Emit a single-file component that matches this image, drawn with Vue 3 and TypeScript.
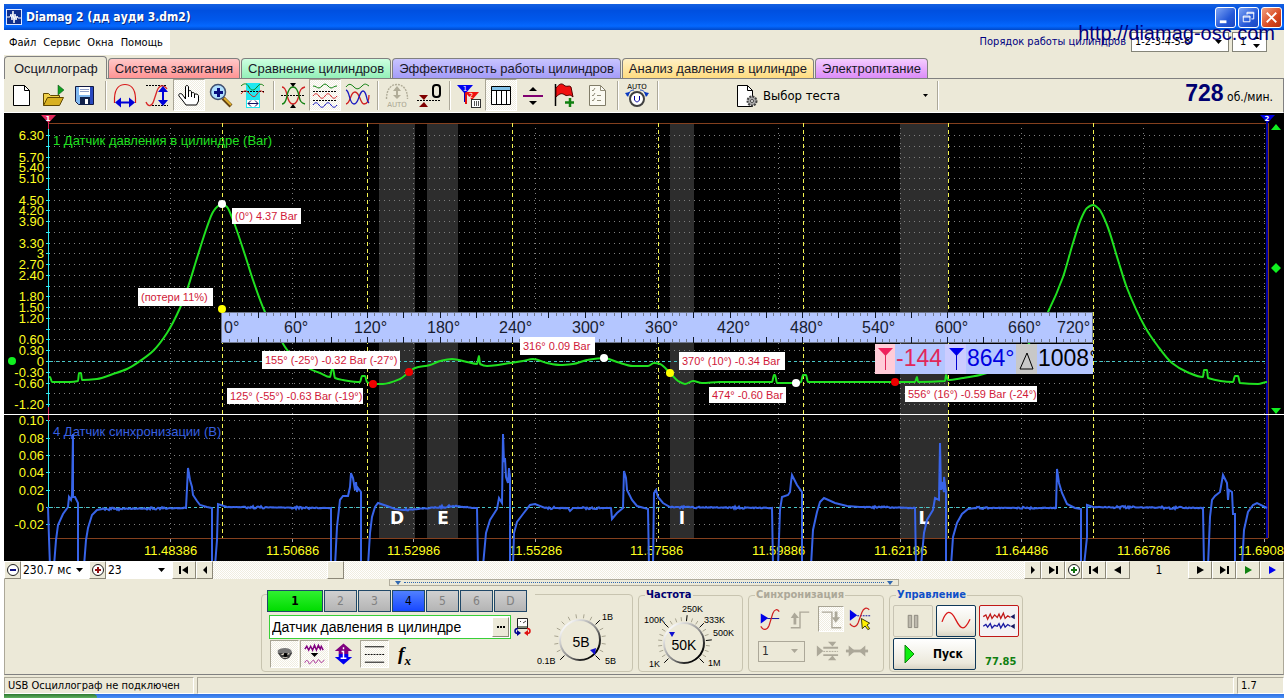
<script setup lang="ts">
import { ref } from 'vue'

type Point = [number, number]

interface Reading {
  x: number
  y: number
  w: number
  h: number
  text: string
}

const tabs = [
  { label: 'Осциллограф', tone: 'plain' },
  { label: 'Система зажигания', tone: 'red' },
  { label: 'Сравнение цилиндров', tone: 'green' },
  { label: 'Эффективность работы цилиндров', tone: 'violet' },
  { label: 'Анализ давления в цилиндре', tone: 'yellow' },
  { label: 'Электропитание', tone: 'magenta' },
]
const activeTab = ref('Осциллограф')

const channels = ['1', '2', '3', '4', '5', '6', 'D']
const channelName = ref('Датчик давления в цилиндре')

// Pressure channel scale: zero at y = 361, 10.76 px for each 0.3 bar.
const pressureY = (value: number): number => Math.round(361 - value * 35.87)
const pressureSteps: number[] = Array.from({ length: 26 }, (_, i) => (21 - i) * 0.3).map((v) => Math.round(v * 10) / 10)
const hiddenSteps = [6, 4.8, 3.6, 2.1, 0.9, -0.9]
const pressureLabels = pressureSteps
  .filter((v) => !hiddenSteps.includes(v))
  .map((v) => ({ y: pressureY(v), text: v === 0 || v === 3 ? String(v) : v.toFixed(2) }))

const syncSteps = [0.1, 0.08, 0.06, 0.04, 0.02, 0, -0.02]
const syncY = (value: number): number => Math.round(507 - value * 868)
const syncLabels = syncSteps.map((v) => ({ y: syncY(v), text: v === 0 ? '0' : v.toFixed(2) }))

const timeLabels = ['11.48386', '11.50686', '11.52986', '11.55286', '11.57586', '11.59886', '11.62186', '11.64486', '11.66786', '11.6908']
const timeX = (i: number): number => Math.round(170 + i * 121.6)

const strokeX = [222, 367, 512, 658, 803, 948, 1093]
const bands = [
  { x: 379, w: 36, letter: 'D' },
  { x: 427, w: 31, letter: 'E' },
  { x: 670, w: 24, letter: 'I' },
  { x: 900, w: 48, letter: 'L' },
]

// Crank angle ruler: 720 degrees over 870 px, a tick for each 6 degrees.
const rulerTicks = Array.from({ length: 119 }, (_, i) => i + 1).map((i) => ({
  x: Math.round(222 + i * 7.25),
  major: i % 5 === 0,
}))
const rulerLabels = Array.from({ length: 13 }, (_, i) => {
  const x = 222 + i * 72.6
  const shift = i === 0 ? -2 : i === 1 ? 11 : i === 12 ? 36 : 13
  return { x: Math.round(x - shift), text: `${i * 60}°` }
})

const readings: Reading[] = [
  { x: 232, y: 208, w: 69, h: 16, text: '(0°) 4.37 Bar' },
  { x: 138, y: 288, w: 75, h: 18, text: '(потери 11%)' },
  { x: 262, y: 351, w: 138, h: 18, text: '155° (-25°) -0.32 Bar (-27°)' },
  { x: 227, y: 388, w: 136, h: 16, text: '125° (-55°) -0.63 Bar (-19°)' },
  { x: 520, y: 337, w: 75, h: 18, text: '316° 0.09 Bar' },
  { x: 679, y: 352, w: 106, h: 18, text: '370° (10°) -0.34 Bar' },
  { x: 709, y: 387, w: 77, h: 16, text: '474° -0.60 Bar' },
  { x: 905, y: 386, w: 132, h: 16, text: '556° (16°) -0.59 Bar (-24°)' },
]

const dots = [
  { x: 222, y: 204, tone: 'white' },
  { x: 222, y: 309, tone: 'yellow' },
  { x: 373, y: 384, tone: 'red' },
  { x: 409, y: 372, tone: 'red' },
  { x: 604, y: 358, tone: 'white' },
  { x: 670, y: 373, tone: 'yellow' },
  { x: 796, y: 383, tone: 'white' },
  { x: 895, y: 382, tone: 'red' },
]

const pressure: Point[] = [
  [49, 377], [50, 377], [52, 382], [70, 382], [78, 381], [79, 373], [81, 373], [82, 380], [97, 379], [113, 374], [127, 369],
  [140, 361], [153, 351], [167, 333], [180, 308], [188, 287], [197, 258], [207, 227], [213, 212], [218, 206], [222, 204],
  [227, 207], [233, 220], [245, 255], [253, 280], [265, 312], [282, 342], [288, 351], [308, 368], [320, 373], [330, 377],
  [332, 369], [333, 369], [335, 378], [343, 380], [360, 382], [362, 376], [365, 376], [367, 382], [373, 384], [383, 384],
  [400, 379], [409, 372], [415, 368], [430, 365], [440, 361], [452, 359], [467, 362], [477, 364], [479, 356], [480, 364],
  [487, 366], [498, 365], [510, 363], [523, 361], [533, 359], [547, 363], [560, 365], [573, 364], [587, 360], [604, 358],
  [617, 362], [633, 366], [648, 366], [654, 363], [660, 364], [670, 373], [678, 381], [685, 384], [693, 381], [702, 383],
  [720, 382], [746, 382], [772, 382], [774, 375], [775, 375], [777, 383], [796, 383], [801, 382], [803, 375], [806, 375], [808, 382],
  [860, 382], [895, 382], [915, 382], [917, 377], [918, 382], [945, 381], [946, 375], [948, 380], [963, 378], [980, 375],
  [1000, 368], [1020, 354], [1035, 335], [1048, 312], [1063, 277], [1073, 243], [1081, 219], [1087, 208], [1093, 205],
  [1099, 209], [1107, 225], [1118, 260], [1127, 288], [1145, 327], [1157, 345], [1172, 363], [1187, 372], [1203, 377],
  [1204, 370], [1207, 370], [1208, 378], [1233, 382], [1235, 376], [1238, 376], [1240, 383], [1258, 384], [1267, 382],
]

const sync: Point[] = [
  [48, 507], [49, 538], [50, 566], [54, 566], [56, 540], [58, 525], [63, 514], [68, 507], [69, 497], [71, 500], [72, 495],
  [73, 434], [73, 497], [75, 497], [78, 503], [78, 566], [84, 566], [86, 540], [88, 528], [92, 515], [97, 510], [102, 509],
  [186, 508], [188, 468], [190, 480], [192, 487], [193, 495], [197, 501], [200, 505], [207, 507], [212, 508], [212, 566],
  [215, 566], [217, 540], [218, 504], [227, 507], [331, 508], [331, 566], [335, 566], [337, 527], [340, 500], [343, 496],
  [348, 496], [350, 487], [351, 473], [353, 478], [355, 490], [356, 482], [357, 492], [358, 488], [361, 492], [361, 566],
  [368, 566], [370, 533], [372, 517], [375, 507], [378, 503], [387, 506], [395, 509], [403, 510], [430, 508], [453, 506],
  [477, 508], [478, 566], [483, 566], [486, 533], [490, 520], [497, 509], [499, 498], [502, 503], [503, 434], [504, 462],
  [505, 458], [506, 477], [508, 483], [509, 468], [510, 477], [510, 566], [513, 566], [514, 533], [517, 522], [523, 514],
  [530, 505], [535, 504], [545, 508], [568, 508], [570, 511], [573, 508], [611, 508], [612, 519], [617, 513], [623, 508],
  [624, 471], [626, 478], [627, 490], [632, 500], [637, 506], [648, 509], [649, 566], [653, 566], [654, 493], [656, 490],
  [658, 497], [663, 503], [670, 507], [772, 508], [773, 566], [778, 566], [780, 510], [782, 497], [788, 495], [790, 492],
  [791, 482], [792, 475], [797, 485], [802, 492], [802, 566], [811, 566], [813, 530], [817, 512], [820, 502], [824, 498],
  [835, 503], [847, 506], [860, 507], [915, 508], [916, 566], [921, 566], [924, 533], [927, 520], [933, 510], [935, 498],
  [939, 500], [940, 443], [941, 490], [942, 482], [944, 492], [944, 477], [946, 492], [946, 566], [951, 566], [953, 537],
  [957, 523], [962, 514], [968, 509], [975, 508], [1056, 508], [1057, 469], [1059, 483], [1062, 493], [1067, 504],
  [1075, 508], [1081, 509], [1081, 566], [1084, 566], [1087, 537], [1087, 505], [1093, 507], [1203, 508], [1204, 566],
  [1208, 566], [1210, 517], [1212, 500], [1215, 496], [1220, 492], [1223, 475], [1227, 483], [1228, 500], [1229, 490],
  [1232, 492], [1233, 514], [1235, 514], [1235, 566], [1242, 566], [1244, 530], [1248, 512], [1253, 505], [1257, 503], [1267, 508],
]

// Monotone cubic path: smooth flanks without overshoot at the ignition spikes.
function smoothPath(points: Point[]): string {
  const slope = (i: number): number => (points[i + 1][1] - points[i][1]) / (points[i + 1][0] - points[i][0])
  const tangent = (i: number): number => {
    if (i === 0 || i === points.length - 1) return 0
    const a = slope(i - 1)
    const b = slope(i)
    return a * b <= 0 ? 0 : (2 * a * b) / (a + b)
  }
  let d = `M${points[0][0]} ${points[0][1]}`
  for (let i = 0; i < points.length - 1; i++) {
    const [x0, y0] = points[i]
    const [x1, y1] = points[i + 1]
    const third = (x1 - x0) / 3
    d += `C${x0 + third} ${y0 + tangent(i) * third} ${x1 - third} ${y1 - tangent(i + 1) * third} ${x1} ${y1}`
  }
  return d
}

// Straight path with a fixed ripple on the long idle stretches.
function noisyPath(points: Point[]): string {
  let d = `M${points[0][0]} ${points[0][1]}`
  for (let i = 1; i < points.length; i++) {
    const [x0, y0] = points[i - 1]
    const [x1, y1] = points[i]
    if (x1 - x0 > 13 && Math.abs(y1 - y0) < 4) {
      for (let x = x0 + 1; x < x1; x += 1) {
        const hash = Math.sin(x * 12.9898) * 43758.5453
        const burst = Math.sin(x * 0.13) > 0.2 ? 2.4 : 0.8
        const ripple = (hash - Math.floor(hash) - 0.5) * burst
        d += `L${x} ${(y0 + ((y1 - y0) * (x - x0)) / (x1 - x0) + ripple).toFixed(1)}`
      }
    }
    d += `L${x1} ${y1}`
  }
  return d
}

const pressurePath = smoothPath(pressure)
const syncPath = noisyPath(sync)

function dialTicks(cx: number, cy: number, count: number, majors: number[]) {
  return Array.from({ length: count }, (_, i) => {
    const angle = ((225 - (270 * i) / (count - 1)) * Math.PI) / 180
    const major = majors.includes(i)
    const outer = major ? 28 : 26
    return {
      x1: cx + Math.cos(angle) * 22,
      y1: cy - Math.sin(angle) * 22,
      x2: cx + Math.cos(angle) * outer,
      y2: cy - Math.sin(angle) * outer,
      major,
    }
  })
}
const voltTicks = dialTicks(580, 640, 16, [0, 10, 15])
const rateTicks = dialTicks(684, 643, 22, [0, 7, 11, 14, 17, 21])
</script>

<template>
  <div class="desktop">
    <div class="window">
      <header class="title-bar">
        <svg class="app-icon" viewBox="0 0 16 16" width="16" height="16">
          <rect x="0.5" y="0.5" width="15" height="15" fill="#10308c" stroke="#dfe8ff" />
          <path d="M1 8h3l1-3 1 6 1-9 1 12 1-9 1 6 1-4 1 2h3" fill="none" stroke="#fff" />
        </svg>
        <h1>Diamag 2 (дд ауди 3.dm2)</h1>
        <button class="win-button" type="button" aria-label="Свернуть">
          <svg viewBox="0 0 20 20" width="19" height="19"><path d="M4 13h7v3H4z" fill="#fff" /></svg>
        </button>
        <button class="win-button" type="button" aria-label="Развернуть">
          <svg viewBox="0 0 20 20" width="19" height="19" fill="none" stroke="#fff"><path d="M8.500 7V4.500h7v7H13M8 5.500h8M4.500 8.500h7v6h-7zM4 9.500h8" /></svg>
        </button>
        <button class="win-button close" type="button" aria-label="Закрыть">
          <svg viewBox="0 0 20 20" width="19" height="19"><path d="M5 5l10 10M15 5L5 15" stroke="#fff" stroke-width="2" /></svg>
        </button>
      </header>

      <div class="menu-row">
        <nav class="menu">
          <button type="button">Файл</button>
          <button type="button">Сервис</button>
          <button type="button">Окна</button>
          <button type="button">Помощь</button>
        </nav>
        <div class="order">
          <label for="order">Порядок работы цилиндров</label>
          <span class="drop order-drop">
            <select id="order"><option>1-2-3-4-5-6</option></select>
            <svg viewBox="0 0 7 4" width="7" height="4"><path d="M0 0h7L3.500 4z" /></svg>
          </span>
          <span class="drop spin">
            <input type="text" value="1" aria-label="Номер цилиндра">
            <svg viewBox="0 0 7 12" width="7" height="12"><path d="M0 3h7L3.500 0zM0 8h7L3.500 12z" /></svg>
          </span>
          <a class="site" href="#">http://diamag-osc.com</a>
        </div>
      </div>

      <div class="tabs" role="tablist">
        <button
          v-for="tab in tabs"
          :key="tab.label"
          type="button"
          role="tab"
          :class="['tab', tab.tone]"
          :aria-selected="tab.label === activeTab"
        >{{ tab.label }}</button>
      </div>

      <div class="toolbar">
        <button class="tool" type="button" aria-label="Новый">
          <svg viewBox="0 0 26 26"><path d="M5.500 2.500h11l5 5v15h-16z" fill="#fff" stroke="#000" /><path d="M16.500 2.500v5h5" fill="none" stroke="#000" /></svg>
        </button>
        <button class="tool" type="button" aria-label="Открыть">
          <svg viewBox="0 0 26 26"><path d="M3.500 22.500v-12h5l2 2h9v3" fill="#f0d048" stroke="#604800" /><path d="M3.500 22.500l4-8h16l-4 8z" fill="#d8b020" stroke="#604800" /><path d="M18 12V2l6 5z" fill="#10a020" stroke="#084010" stroke-width="0.5" /></svg>
        </button>
        <button class="tool" type="button" aria-label="Сохранить">
          <svg viewBox="0 0 26 26"><path d="M3.500 3.500h18v18h-15l-3-3z" fill="#80b8f0" stroke="#101840" /><path d="M7 4h11v8H7z" fill="#fff" /><path d="M18 4h3v17h-3z" fill="#2848c0" /><path d="M8 6.500h9M8 8.500h9" stroke="#90a0c8" /><path d="M8 14h10v8H8z" fill="#102048" /><path d="M13 16h3v5h-3z" fill="#fff" /></svg>
        </button>
        <span class="sep" />
        <button class="tool" type="button" aria-label="Ширина">
          <svg viewBox="0 0 26 26"><path d="M2.500 20v-5C3 5 8 1.500 13 1.500S23 5 23.500 15v5" fill="none" stroke="#d81818" stroke-width="1.200" /><path d="M3 19.500l6-5v4h8v-4l6 5-6 5v-4H9v4z" fill="#0000d8" /></svg>
        </button>
        <button class="tool" type="button" aria-label="Высота">
          <svg viewBox="0 0 26 26"><path d="M2 2.500h20M8 22.500h16" stroke="#000" stroke-dasharray="2 1" /><path d="M2 19c2 5 6 5 8-2l3-9c2-6 7-7 10-2" fill="none" stroke="#d82828" stroke-width="1.300" /><path d="M19 3l5 6h-4v8h4l-5 6-5-6h4V9h-4z" fill="#0000d8" /></svg>
        </button>
        <button class="tool pressed" type="button" aria-label="Рука">
          <svg viewBox="0 0 26 26"><path d="M9.500 16V4c0-2 3-2 3 0v7-2c0-2 3-2 3 0v2c0-2 3-2 3 0v1c0-2 4-1 4 1v5l-2 4H10l-3-4-4-5c-1-2 1-3 3-2z" fill="#fff" stroke="#000" /><path d="M12.500 9v5M15.500 11v3M18.500 12v3" stroke="#000" /></svg>
        </button>
        <button class="tool" type="button" aria-label="Лупа">
          <svg viewBox="0 0 26 26"><path d="M15 15l8 8" stroke="#604010" stroke-width="4" /><path d="M16 15l7 7" stroke="#e0b030" stroke-width="2" /><circle cx="10" cy="9" r="7.500" fill="#b0e0ff" stroke="#405070" stroke-width="1.500" /><path d="M9 5h3v3h3v3h-3v3H9v-3H6V8h3z" fill="#081080" /></svg>
        </button>
        <button class="tool" type="button" aria-label="Участок">
          <svg viewBox="0 0 26 26"><path d="M6 0h14v25H6z" fill="#20e8f0" /><path d="M1 3c3-3 6-3 8 1s5 4 8 0 5-3 7-1" fill="none" stroke="#108010" /><path d="M1 8.500h23" stroke="#000" stroke-dasharray="2 1" /><path d="M1 11c3-4 5-4 8-1s5 6 8 1 5-3 7-1" fill="none" stroke="#d02020" /><path d="M7 17h12v7H7z" fill="#fff" /><path d="M8 20.500h10M11 17.500l-3 3 3 3M15 17.500l3 3-3 3" fill="none" stroke="#101060" /></svg>
        </button>
        <span class="sep" />
        <button class="tool" type="button" aria-label="Симметрия">
          <svg viewBox="0 0 26 26"><path d="M1 12.500h24" stroke="#000" stroke-dasharray="2 1" /><path d="M2 4c3 0 4 3 5 8s3 9 6 9 5-4 6-9 2-7 6-8" fill="none" stroke="#d02020" stroke-width="1.300" /><path d="M2 21c3 0 4-3 5-8s3-9 6-9 5 4 6 9 2 7 6 8" fill="none" stroke="#108010" stroke-width="1.300" /><path d="M10 0h6l-3 4zM10 25h6l-3-4z" /></svg>
        </button>
        <button class="tool pressed" type="button" aria-label="Раздельно">
          <svg viewBox="0 0 26 26" fill="none"><path d="M1 3c3 0 4 2 6 2s4-4 6-4 4 4 6 4 3-2 6-2" stroke="#108010" /><path d="M1 8.500h24M1 17.500h24" stroke="#000" stroke-dasharray="2 1" /><path d="M1 13c2-3 4-3 6 0s4 3 6 0 4-3 6 0 4 3 6 0" stroke="#d02020" /><path d="M1 22c2-3 4-3 6 0s4 3 6 0 4-3 6 0 4 3 6 0" stroke="#1010c0" /></svg>
        </button>
        <button class="tool" type="button" aria-label="Вместе">
          <svg viewBox="0 0 26 26" fill="none"><path d="M2 4c3-4 5-3 8 0s5 2 8-1 4-2 7 0" stroke="#108010" /><path d="M2 21c5-1 4-12 9-12s5 12 9 12 5-5 5-9" stroke="#d02020" stroke-width="1.300" /><path d="M2 7c4 1 3 14 8 14s5-13 9-13 3 10 6 12" stroke="#1818c0" stroke-width="1.300" /></svg>
        </button>
        <span class="sep" />
        <button class="tool" type="button" aria-label="Авто" disabled>
          <svg viewBox="0 0 26 26"><path d="M2.500 16C2.500 5 8 1.500 13 1.500S23.500 5 23.500 16" fill="none" stroke="#b0ac98" stroke-dasharray="2 1" stroke-width="1.400" /><path d="M13 3l4 5h-3v4h3l-4 4-4-4h3V8H9z" fill="#b0ac98" /><text x="13" y="24" class="pixel-label" fill="#a8a490">AUTO</text></svg>
        </button>
        <button class="tool" type="button" aria-label="Ноль">
          <svg viewBox="0 0 26 26"><path d="M3 12h9l-4 5zM3 24h9l-4-5z" fill="#800000" /><path d="M1 17.500h24" stroke="#000" stroke-dasharray="2 1" /><rect x="17" y="2" width="7" height="12" rx="3" fill="none" stroke="#000" stroke-width="2" /></svg>
        </button>
        <span class="sep" />
        <button class="tool" type="button" aria-label="Маркеры">
          <svg viewBox="0 0 26 26"><path d="M1 2h16l-8 9z" fill="#0000f0" /><path d="M9 9v10" stroke="#0000c0" stroke-width="2" /><path d="M9 9h14l-7 8z" fill="#f01010" /><path d="M10 10v11" stroke="#e01010" stroke-width="2" /><text x="9" y="8" class="pixel-label" fill="#fff">1</text><text x="15" y="15" class="pixel-label" fill="#fff">2</text><rect x="15.500" y="16.500" width="9" height="8" fill="#fff" stroke="#303030" /><path d="M18.500 18v5M20.500 18v5M22.500 18v5" stroke="#555" /></svg>
        </button>
        <button class="tool pressed" type="button" aria-label="Таблица">
          <svg viewBox="0 0 26 26"><path d="M3.500 3.500h19v18h-19z" fill="#fff" stroke="#000" /><path d="M4 4h18v3H4z" fill="#80c0e8" /><path d="M3 7.500h20M8.500 8v13M13.500 8v13M18.500 8v13" stroke="#000" /></svg>
        </button>
        <button class="tool" type="button" aria-label="Разделить">
          <svg viewBox="0 0 26 26"><path d="M9 8l4-4 4 4zM9 18l4 4 4-4z" /><path d="M3 13h20" stroke="#800070" stroke-width="2" /></svg>
        </button>
        <button class="tool" type="button" aria-label="Флаг">
          <svg viewBox="0 0 26 26"><path d="M3.500 1v22" stroke="#000" stroke-width="1.500" /><path d="M4 5c4-5 6-5 9-2 3 1 4-1 6 1l2 10c-4-4-5 0-8-2s-5-2-9 2z" fill="#f01010" stroke="#500000" /><path d="M18 15v9M13 19.500h9" stroke="#108010" stroke-width="2.500" /></svg>
        </button>
        <button class="tool" type="button" aria-label="Отчёт" disabled>
          <svg viewBox="0 0 26 26"><path d="M5.500 2.500h11l5 5v15h-16z" fill="#fbfaf2" stroke="#807c68" /><path d="M16.500 2.500v5h5M8 7l1 1 2-3M8 12l1 1 2-3M8 17l1 1 2-3M13 12.500h4M13 17.500h4" fill="none" stroke="#908c78" /></svg>
        </button>
        <span class="sep" />
        <button class="tool" type="button" aria-label="Автонапряжение">
          <svg viewBox="0 0 26 26"><text x="13" y="6" class="pixel-label" fill="#000">AUTO</text><path d="M3 13c2-5 5-6 7-6M23 13c-2-5-5-6-7-6" fill="none" stroke="#0838c0" /><path d="M1 10l5-1-2 5zM25 10l-5-1 2 5z" fill="#0838c0" /><circle cx="13" cy="16" r="7" fill="#fff" stroke="#404040" stroke-width="2" /><path d="M10.500 13v4l2 2h1l2-2v-4" fill="none" stroke="#0000a0" /></svg>
        </button>
        <span class="sep" />
        <div class="test">
          <svg viewBox="0 0 24 26" width="24" height="26"><path d="M2.500 2.500h10l5 5v16h-15z" fill="#fff" stroke="#000" /><path d="M12.500 2.500v5h5" fill="none" stroke="#000" /><circle cx="17" cy="18" r="4.500" fill="#aaa" stroke="#444" stroke-width="2" stroke-dasharray="2 1" /><circle cx="17" cy="18" r="1.500" fill="#fff" stroke="#444" /></svg>
          <select aria-label="Выбор теста"><option>Выбор теста</option></select>
          <svg viewBox="0 0 5 3" width="5" height="3"><path d="M0 0h5L2.500 3z" /></svg>
        </div>
        <span class="sep" />
        <p class="rpm"><strong>728</strong> об./мин.</p>
      </div>

      <svg class="scope" viewBox="4 113 1280 448" role="img" aria-label="Осциллограмма">
        <defs>
          <clipPath id="readout-area"><rect x="875" y="344" width="218" height="30" /></clipPath>
        </defs>
        <rect x="4" y="113" width="1280" height="448" fill="#000" />
        <rect v-for="band in bands" :key="band.letter" :x="band.x" y="124" :width="band.w" height="414" fill="#2d2d2d" />

        <g class="grid">
          <path v-for="v in pressureSteps" :key="v" :d="`M54 ${pressureY(v) + 0.5}H1267`" />
          <path v-for="v in syncSteps" :key="'s' + v" :d="`M54 ${syncY(v) + 0.5}H1267`" />
          <path v-for="(label, i) in timeLabels" :key="label" :d="`M${timeX(i) + 0.5} 128V538`" />
        </g>
        <path class="zero" d="M50 361.500H1267M50 507.500H1267" />
        <path class="ticks" d="M48.500 127V535" />
        <path v-for="v in pressureSteps" :key="'t' + v" class="ticks" :d="`M46 ${pressureY(v) + 0.5}h4`" />
        <path v-for="v in syncSteps" :key="'u' + v" class="ticks" :d="`M46 ${syncY(v) + 0.5}h4`" />
        <path d="M48 123.500H1268M48 538.500H1268" stroke="#84401e" />
        <path v-for="(label, i) in timeLabels" :key="'v' + label" :d="`M${timeX(i) + 0.5} 539v3`" stroke="#aaa" />
        <path v-for="x in strokeX" :key="x" class="stroke-line" :d="`M${x + 0.5} 123V538`" />
        <path d="M1268.500 123V538" stroke="#84401e" />
        <path d="M1267 122V538" stroke="#0000a8" stroke-width="2" />
        <path d="M48.500 119v10M48.500 407v14M48.500 534v6" stroke="#e0285a" />

        <g class="axis">
          <text v-for="label in pressureLabels" :key="label.text" x="44" :y="label.y + 5" text-anchor="end">{{ label.text }}</text>
          <text v-for="label in syncLabels" :key="'s' + label.text" x="44" :y="label.y + 5" text-anchor="end">{{ label.text }}</text>
          <text v-for="(label, i) in timeLabels" :key="label" :x="timeX(i) - 26" y="555">{{ label }}</text>
        </g>
        <text class="channel-title" x="53" y="145" fill="#20e020">1 Датчик давления в цилиндре (Bar)</text>
        <text class="channel-title" x="53" y="436" fill="#3860e0">4 Датчик синхронизации (В)</text>

        <text v-for="band in bands" :key="'l' + band.letter" class="phase" :x="Math.round(band.x + band.w / 2)" y="524">{{ band.letter }}</text>
        <path :d="syncPath" fill="none" stroke="#3864e8" stroke-width="2" />
        <path :d="pressurePath" fill="none" stroke="#20e020" stroke-width="2" />
        <path d="M4 414.500H1284" stroke="#fff" />

        <rect x="221.500" y="312.500" width="871" height="30" fill="#b4c6ff" stroke="#70788c" />
        <path
          v-for="tick in rulerTicks"
          :key="tick.x"
          :d="tick.major ? `M${tick.x + 0.5} 312v6M${tick.x + 0.5} 343v-6` : `M${tick.x + 0.5} 313v3M${tick.x + 0.5} 342v-3`"
          :stroke="tick.major ? '#101828' : '#70788c'"
        />
        <text v-for="label in rulerLabels" :key="label.text" class="angle" :x="label.x" y="333">{{ label.text }}</text>

        <g class="readout" clip-path="url(#readout-area)">
          <rect x="875" y="344" width="218" height="30" fill="#b4c6ff" />
          <rect x="875" y="344" width="20" height="30" fill="#ffccd8" />
          <rect x="945" y="344" width="21" height="30" fill="#ccccff" />
          <rect x="1016" y="344" width="21" height="30" fill="#c8c8c8" />
          <path d="M878 348h15l-7.500 8z" fill="#f0205c" />
          <path d="M885.500 352v18" stroke="#e0285a" />
          <path d="M949 348h15l-7.500 8z" fill="#0000f0" />
          <path d="M956.500 352v18" stroke="#0000d0" />
          <path d="M1027 353l6 16h-13z" fill="none" stroke="#000" />
          <text x="896" y="366" fill="#e0285a">-144</text>
          <text x="967" y="366" fill="#0000e0">864°</text>
          <text x="1038" y="366" fill="#000">1008°</text>
        </g>

        <g v-for="reading in readings" :key="reading.text" class="reading">
          <rect :x="reading.x" :y="reading.y" :width="reading.w" :height="reading.h" fill="#fff" />
          <text :x="reading.x + 3" :y="reading.y + (reading.h === 18 ? 13 : 12)">{{ reading.text }}</text>
        </g>
        <circle v-for="dot in dots" :key="dot.x + dot.y" :cx="dot.x" :cy="dot.y" r="4" :class="dot.tone" />

        <path d="M41 115h15l-7.500 8z" fill="#e0285a" />
        <path d="M1260 115h15l-7.500 8z" fill="#0000e0" />
        <text class="marker" x="48" y="121">1</text>
        <text class="marker" x="1267" y="121">2</text>
        <path d="M1271 130h10l-5-6zM1271 408h10l-5 6zM1271 268l5-5 5 5-5 5z" fill="#10f020" />
        <circle cx="12" cy="361" r="4" fill="#10f020" />
      </svg>

      <div class="strip">
        <button class="nav narrow" type="button" aria-label="Сжать"><svg viewBox="0 0 16 16"><circle cx="8" cy="8" r="5.500" fill="#fff" stroke="#202020" /><path d="M5 8h6" stroke="#101080" stroke-width="2" /></svg></button>
        <span class="drop span"><select aria-label="Развёртка"><option>230.7 мс</option></select><svg viewBox="0 0 7 4" width="7" height="4"><path d="M0 0h7L3.500 4z" /></svg></span>
        <button class="nav narrow" type="button" aria-label="Растянуть"><svg viewBox="0 0 16 16"><circle cx="8" cy="8" r="5.500" fill="#fff" stroke="#202020" /><path d="M5 8h6M8 5v6" stroke="#901010" stroke-width="2" /></svg></button>
        <span class="drop zoom"><select aria-label="Масштаб"><option>23</option></select><svg viewBox="0 0 7 4" width="7" height="4"><path d="M0 0h7L3.500 4z" /></svg></span>
        <button class="nav" type="button" aria-label="В начало"><svg viewBox="0 0 16 16"><path d="M3 4h2v8H3zM12 4v8L6 8z" /></svg></button>
        <button class="nav narrow" type="button" aria-label="Влево"><svg viewBox="0 0 16 16"><path d="M10 4v8L6 8z" /></svg></button>
        <div class="track"><span class="thumb" /></div>
        <button class="nav narrow" type="button" aria-label="Вправо"><svg viewBox="0 0 16 16"><path d="M6 4v8l4-4z" /></svg></button>
        <button class="nav" type="button" aria-label="В конец"><svg viewBox="0 0 16 16"><path d="M4 4v8l6-4zM11 4h2v8h-2z" /></svg></button>
        <button class="nav narrow" type="button" aria-label="Добавить"><svg viewBox="0 0 16 16"><circle cx="8" cy="8" r="5.500" fill="#fff" stroke="#202020" /><path d="M5 8h6M8 5v6" stroke="#107010" stroke-width="2" /></svg></button>
        <button class="nav" type="button" aria-label="Первый кадр"><svg viewBox="0 0 16 16"><path d="M3 4h2v8H3zM12 4v8L6 8z" /></svg></button>
        <button class="nav" type="button" aria-label="Предыдущий кадр"><svg viewBox="0 0 16 16"><path d="M11 4v8L4 8z" /></svg></button>
        <output class="frame">1</output>
        <button class="nav" type="button" aria-label="Следующий кадр"><svg viewBox="0 0 16 16"><path d="M5 4v8l7-4z" /></svg></button>
        <button class="nav" type="button" aria-label="Последний кадр"><svg viewBox="0 0 16 16"><path d="M4 4v8l6-4zM11 4h2v8h-2z" /></svg></button>
        <button class="nav" type="button" aria-label="Воспроизвести"><svg viewBox="0 0 16 16"><path d="M5 4v8l7-4z" fill="#108010" /></svg></button>
        <button class="nav" type="button" aria-label="Далее"><svg viewBox="0 0 16 16"><path d="M5 4v8l7-4z" fill="#0000f0" /></svg></button>
      </div>

      <div class="panel">
        <div class="splitter">
          <svg viewBox="0 0 6 4" width="6" height="4"><path d="M0 0h6L3 4z" /></svg>
          <span />
          <svg viewBox="0 0 6 4" width="6" height="4"><path d="M0 0h6L3 4z" /></svg>
        </div>

        <div class="groups">
          <section class="group channel-group" aria-label="Каналы">
            <div class="channel-side">
              <div class="channels">
                <button v-for="ch in channels" :key="ch" type="button" :class="['channel', 'ch-' + ch]">{{ ch }}</button>
              </div>
              <div class="name-row">
                <div class="name-box">
                  <input v-model="channelName" type="text" aria-label="Название канала">
                  <button type="button" aria-label="Выбрать датчик"><svg viewBox="0 0 10 10" width="10" height="10"><path d="M1 4h2v2H1zM4 4h2v2H4zM7 4h2v2H7z" /></svg></button>
                </div>
                <button class="swap" type="button" aria-label="Калибровка">
                  <svg viewBox="0 0 18 20" width="18" height="20"><path d="M3.500 1.500h10v10h-10z" fill="#fff" stroke="#222" /><path d="M4 9h9v2H4z" fill="#808878" /><path d="M7 5l-1-1M9 6l3-2" stroke="#444" /><path d="M4 11.500c-4 0-4 5 0 5" fill="none" stroke="#000090" stroke-width="1.500" /><path d="M3 13l4 3-4 3z" fill="#000090" /><path d="M13 11.500c4 0 4 5 0 5" fill="none" stroke="#e01010" stroke-width="1.500" /><path d="M14 13l-4 3 4 3z" fill="#e01010" /></svg>
                </button>
              </div>
              <div class="toggles">
                <button class="toggle pressed" type="button" aria-label="Показать">
                  <svg viewBox="0 0 28 26"><path d="M7 9c4-3 11-3 14 0l1 3H7z" fill="#787878" /><path d="M7 12h15l-3 5c-3 2-6 2-9-1z" fill="#404040" /><path d="M10 14l3-2 1 2zM16 14l2-2 2 1zM12 16h5v1h-5z" fill="#e8e0d0" /><circle cx="15" cy="14" r="2" /></svg>
                </button>
                <button class="toggle pressed" type="button" aria-label="Фильтр">
                  <svg viewBox="0 0 28 26"><path d="M4 8l2-3 2 4 2-4 2 4 2-5 2 5 2-5 2 4 1-3 2 4" fill="none" stroke="#800080" stroke-width="1.500" /><path d="M10 12h8l-4 4z" /><path d="M4 22c1-3 3-3 4 0s2 0 3-1 2-3 3 0 2 1 3-1 2-1 3 1 3 0 4-2" fill="none" stroke="#a02090" /></svg>
                </button>
                <button class="toggle" type="button" aria-label="Инверсия">
                  <svg viewBox="0 0 28 26"><path d="M14 2l9 8h-4v3H9v-3H5z" fill="#800080" /><path d="M14 24l9-8h-4v-3H9v3H5z" fill="#0000f0" /><path d="M12 10.500h2v7M11 17.500h6M14 6v2" fill="none" stroke="#fff" stroke-width="1.500" /></svg>
                </button>
                <button class="toggle pressed" type="button" aria-label="Уровни">
                  <svg viewBox="0 0 28 26"><path d="M4 5.500h20M4 21.500h20" stroke="#000" /><path d="M4 13.500h20" stroke="#000" stroke-dasharray="2 1" /></svg>
                </button>
                <button class="toggle fx" type="button"><i>f</i><sub>x</sub></button>
              </div>
            </div>
            <svg class="dial" viewBox="534 602 98 68" width="98" height="68" role="img" aria-label="Предел напряжения">
              <defs>
                <linearGradient id="rim" x1="0" y1="0" x2="1" y2="1">
                  <stop offset="0.15" stop-color="#f4f4f4" />
                  <stop offset="0.55" stop-color="#888" />
                  <stop offset="0.85" stop-color="#000" />
                </linearGradient>
              </defs>
              <path v-for="(t, i) in voltTicks" :key="i" :d="`M${t.x1} ${t.y1}L${t.x2} ${t.y2}`" :stroke="t.major ? '#000' : '#a8a490'" />
              <circle cx="580" cy="640" r="20" fill="none" stroke="url(#rim)" stroke-width="2" />
              <path d="M595 655l-5-5 6-2z" fill="#1010d0" />
              <text class="dial-value" x="581" y="647">5В</text>
              <text x="602" y="620">1В</text>
              <text x="537" y="664">0.1В</text>
              <text x="605" y="664">5В</text>
            </svg>
          </section>

          <fieldset class="group rate-group">
            <legend>Частота</legend>
            <svg class="dial" viewBox="642 602 96 68" width="96" height="68" role="img" aria-label="Частота дискретизации">
              <path v-for="(t, i) in rateTicks" :key="i" :d="`M${t.x1} ${t.y1}L${t.x2} ${t.y2}`" :stroke="t.major ? '#000' : '#a8a490'" />
              <circle cx="684" cy="643" r="20" fill="none" stroke="url(#rim)" stroke-width="2" />
              <path d="M669 632h6l-3 5z" fill="#1010d0" />
              <text class="dial-value" x="684" y="650">50K</text>
              <text x="682" y="612">250K</text>
              <text x="644" y="623">100K</text>
              <text x="704" y="623">333K</text>
              <text x="713" y="636">500K</text>
              <text x="649" y="667">1K</text>
              <text x="708" y="666">1M</text>
            </svg>
          </fieldset>

          <fieldset class="group sync-group">
            <legend>Синхронизация</legend>
            <div class="sync-row">
              <button class="sync-tool" type="button" aria-label="Уровень"><svg viewBox="0 0 26 26"><path d="M3 7l8 5-8 6z" fill="#0000e8" /><path d="M10 12.500h13" stroke="#0000a0" /><path d="M3 21c3 5 7 4 9-1l4-13c2-5 5-5 7-2" fill="none" stroke="#d02020" stroke-width="1.300" /></svg></button>
              <button class="sync-tool" type="button" aria-label="Фронт"><svg viewBox="0 0 26 26"><path d="M3 22.500h10V5.500h10" fill="none" stroke="#aca899" stroke-width="1.500" /><path d="M7 6l5 6H9v7H6v-7H3z" fill="#aca899" /></svg></button>
              <button class="sync-tool pressed" type="button" aria-label="Спад"><svg viewBox="0 0 26 26"><path d="M3 5.500h11v17h10" fill="none" stroke="#aca899" stroke-width="1.500" /><path d="M18 17l5-6h-3V5h-3v6h-3z" fill="#aca899" /></svg></button>
              <button class="sync-tool" type="button" aria-label="Курсор"><svg viewBox="0 0 26 26"><path d="M2 3l8 6-8 6z" fill="#0000e8" /><path d="M10 9.500h14" stroke="#0000a0" stroke-dasharray="2 1" /><path d="M2 18c3 5 7 4 9-1l4-11c2-5 5-6 8-3" fill="none" stroke="#d02020" stroke-width="1.300" /><path d="M14.500 12.500l9 5-3 2 3 4-2 1-3-4-3 3z" fill="#fff000" stroke="#303000" /></svg></button>
            </div>
            <div class="sync-row">
              <span class="drop sync-drop"><select aria-label="Канал синхронизации" disabled><option>1</option></select><svg viewBox="0 0 7 4" width="7" height="4"><path d="M0 0h7L3.500 4z" fill="#aca899" /></svg></span>
              <button class="sync-tool wide" type="button" aria-label="Гистерезис" disabled><svg viewBox="0 0 26 26"><path d="M2 7l7 6-7 6zM14 3h9l-4 5zM14 23h9l-4-5z" fill="#aca899" /><path d="M9 9.500h16M9 17.500h16" stroke="#aca899" stroke-width="2" /><path d="M9 13.500h16" stroke="#aca899" stroke-dasharray="2 1" /></svg></button>
              <button class="sync-tool" type="button" aria-label="Интервал" disabled><svg viewBox="0 0 26 26"><path d="M4 7l7 6-7 6zM22 7l-7 6 7 6z" fill="#aca899" /><path d="M1 13h24" stroke="#aca899" stroke-width="3" /></svg></button>
            </div>
          </fieldset>

          <fieldset class="group run-group">
            <legend>Управление</legend>
            <div class="run-grid">
              <button class="run-button idle" type="button" aria-label="Пауза" disabled><svg viewBox="0 0 40 32" width="36" height="28"><path d="M14.500 9.500h4v14h-4zM21.500 9.500h4v14h-4z" fill="#bcb8ac" stroke="#88857a" /></svg></button>
              <button class="run-button" type="button" aria-label="Однократно"><svg viewBox="0 0 40 32" width="36" height="28"><path d="M4 17C9 3 14 3 20 15s10 12 16-1" fill="none" stroke="#d81818" stroke-width="1.500" /></svg></button>
              <button class="run-button alert" type="button" aria-label="Непрерывно"><svg viewBox="0 0 40 32" width="36" height="28"><path d="M2 11l3-2 2 5 3-6 2 5 3-4 3 3 2-4 2 5 3-6 2 6 3-3 3 2" fill="none" stroke="#c01818" stroke-width="1.500" /><path d="M2 22l3-2 2 3 3-4 2 5 3-3 3 1 2-3 2 5 3-5 2 4 3-3 3 2" fill="none" stroke="#1818a0" stroke-width="1.500" /><path d="M38 8v6l-5-3zM38 19v6l-5-3z" fill="#181860" /></svg></button>
              <button class="run-button start" type="button"><svg viewBox="0 0 12 20" width="12" height="20"><path d="M2 1v18l9-9z" fill="#10f010" stroke="#108010" /></svg><span>Пуск</span></button>
              <output class="load">77.85</output>
            </div>
          </fieldset>
        </div>
      </div>

      <footer class="status">
        <span class="cell first">USB Осциллограф не подключен</span>
        <span class="cell grow" />
        <span class="cell version">1.7</span>
      </footer>
      <div class="taskbar"><span class="start-edge" /></div>
    </div>
  </div>
</template>

<style>
html,
body {
  margin: 0;
  background: #fff;
}
</style>

<style scoped>
* {
  box-sizing: border-box;
}

.desktop {
  padding: 4px 4px 0;
  overflow: hidden;
  font: 11px/13px "DejaVu Sans Condensed", "DejaVu Sans", sans-serif;
  color: #000;
}

.window {
  background: #ece9d8;
}

button,
select,
input {
  margin: 0;
  padding: 0;
  border: 0;
  border-radius: 0;
  background: none;
  font: inherit;
  color: inherit;
  appearance: none;
}

svg {
  display: block;
  flex: none;
}

.title-bar {
  display: flex;
  align-items: center;
  gap: 2px;
  height: 26px;
  padding: 0 2px;
  background: linear-gradient(#1460e0, #0050e0 25%, #0058ec 60%, #0468ff 85%, #0048c8);
}

.title-bar h1 {
  flex: 1;
  margin: 0 2px;
  font-size: 12px;
  line-height: 18px;
  color: #fff;
  text-shadow: 1px 1px 0 #0a2a80;
}

.win-button {
  width: 21px;
  height: 21px;
  border: 1px solid #fff;
  border-radius: 3px;
  background: linear-gradient(135deg, #7ea4f4, #2458d8 60%, #1c48c0);
}

.win-button.close {
  background: linear-gradient(135deg, #f0a080, #d84820 60%, #b83010);
}

.menu-row {
  display: flex;
  justify-content: space-between;
  height: 25px;
}

.menu {
  display: flex;
  gap: 7px;
  width: 166px;
  padding: 0 5px;
  background: #fff;
}

.order {
  position: relative;
  display: flex;
  align-items: center;
  gap: 3px;
  padding: 0 17px 2px 0;
  color: #000080;
}

.order label {
  margin-right: 2px;
}

.site {
  position: absolute;
  right: 9px;
  top: -9px;
  font: 20px/24px "Liberation Sans", Arial, sans-serif;
  color: #000080;
  text-decoration: none;
  white-space: nowrap;
}

.drop {
  display: flex;
  align-items: center;
  padding-right: 6px;
  background: #fff;
  color: #000;
}

.drop select,
.drop input {
  flex: 1;
  min-width: 0;
  padding-left: 3px;
}

.order-drop {
  width: 98px;
  height: 20px;
  border: 1px solid #848478;
}

.spin {
  width: 35px;
  height: 20px;
  border: 1px solid #848478;
}

.spin input {
  padding-left: 7px;
}

.tabs {
  display: flex;
  align-items: flex-end;
  gap: 1px;
  height: 24px;
  border-bottom: 1px solid #808080;
}

.tab {
  height: 20px;
  padding: 0 6px;
  border: 1px solid #808080;
  border-bottom: 0;
  border-radius: 4px 4px 0 0;
  font: 13px/19px "Liberation Sans", Arial, sans-serif;
  color: #181828;
  white-space: nowrap;
}

.tab.plain {
  height: 23px;
  margin-bottom: -1px;
  padding: 0 8px 0 9px;
  background: #ece9d8;
}

.tab.red { background: linear-gradient(#ffc8c8, #ff9494); }
.tab.green { background: linear-gradient(#ccffe0, #94f0b8); }
.tab.violet { background: linear-gradient(#c8c4ff, #a49cf8); }
.tab.yellow { background: linear-gradient(#fff0c4, #ffdc80); }
.tab.magenta { background: linear-gradient(#f4ccff, #dc8cf8); }

.toolbar {
  display: flex;
  height: 34px;
  padding-left: 1px;
  border-right: 1px solid #808080;
  border-bottom: 1px solid #fff;
}

.tool {
  display: flex;
  align-items: center;
  justify-content: center;
  width: 32px;
  height: 32px;
  padding-top: 2px;
}

.tool svg {
  width: 26px;
  height: 26px;
}

.pressed {
  border: 1px solid;
  border-color: #a8a494 #fff #fff #a8a494;
  background: repeating-conic-gradient(#fff 0 25%, #f0ede0 0 50%) 0 0 / 2px 2px;
}

.sep {
  width: 8px;
  margin: 2px 0;
  background: linear-gradient(90deg, transparent 4px, #aca899 4px, #aca899 5px, #fff 5px, #fff 6px, transparent 6px);
}

.pixel-label {
  font: 7px "DejaVu Sans", sans-serif;
  text-anchor: middle;
}

.test {
  display: flex;
  align-items: center;
  width: 272px;
  padding: 0 5px 0 74px;
}

.test select {
  flex: 1;
  padding-left: 4px;
  font: 13px/20px "DejaVu Sans Condensed", "DejaVu Sans", sans-serif;
}

.rpm {
  flex: 1;
  margin: 0;
  padding-right: 10px;
  font: 12px/28px "DejaVu Sans Condensed", "DejaVu Sans", sans-serif;
  text-align: right;
}

.rpm strong {
  font: bold 23px/28px "Liberation Sans", Arial, sans-serif;
  color: #000070;
}

.scope {
  width: 100%;
  font-family: "Liberation Sans", Arial, sans-serif;
}

.grid path {
  stroke: #808080;
  stroke-dasharray: 1 4;
}

.zero {
  stroke: #48c8c8;
  stroke-dasharray: 3 3;
}

.ticks {
  stroke: #30e8f0;
}

.stroke-line {
  stroke: #f4f450;
  stroke-dasharray: 4 3;
}

.axis {
  font-size: 13px;
  fill: #ffff20;
}

.channel-title {
  font-size: 13px;
}

.phase {
  font: bold 17px "DejaVu Sans", sans-serif;
  text-anchor: middle;
  fill: #fff;
}

.angle {
  font-size: 16px;
  fill: #181c30;
}

.readout {
  font-size: 23px;
}

.reading {
  font-size: 11px;
  fill: #d01838;
}

.marker {
  font: bold 7px "DejaVu Sans", sans-serif;
  text-anchor: middle;
  fill: #fff;
}

.white { fill: #fff; }
circle.yellow { fill: #ffff00; }
circle.red { fill: #f00000; }

.strip {
  display: flex;
  align-items: stretch;
  height: 18px;
}

.nav {
  display: flex;
  align-items: center;
  justify-content: center;
  width: 24px;
  border: 1px solid;
  border-color: #fff #8c8878 #8c8878 #fff;
  background: #ece9d8;
}

.nav.narrow {
  width: 17px;
}

.nav svg {
  width: 16px;
  height: 16px;
}

.span { width: 68px; }
.zoom { width: 66px; padding-right: 7px; }

.strip .drop {
  font-size: 12px;
}

.strip .drop select {
  padding-left: 2px;
}

.track {
  display: flex;
  flex: 1;
  background: repeating-conic-gradient(#fff 0 25%, #f0ede0 0 50%) 0 0 / 2px 2px;
}

.thumb {
  width: 17px;
  margin-left: 14%;
  border: 1px solid;
  border-color: #fff #8c8878 #8c8878 #fff;
  background: #ece9d8;
}

.frame {
  width: 58px;
  font-size: 12px;
  line-height: 18px;
  text-align: center;
}

.panel {
  padding-bottom: 2px;
  border-left: 1px solid #aca899;
  border-right: 1px solid #aca899;
  border-bottom: 1px solid #808080;
}

.splitter {
  display: flex;
  align-items: center;
  gap: 3px;
  width: 510px;
  height: 7px;
  margin: 0 auto;
  padding: 0 5px;
  border: 1px solid #b0ac9c;
  fill: #3068b0;
}

.splitter span {
  flex: 1;
  border-top: 1px dotted #3068b0;
}

.groups {
  display: flex;
  justify-content: center;
  gap: 5px;
  padding: 4px 4px 0 0;
}

.group {
  min-width: 0;
  min-height: 82px;
  margin: 0;
  padding: 0;
  border: 1px solid #c8c4b0;
  border-radius: 4px;
}

.group legend {
  height: 10px;
  margin-left: 6px;
  padding: 0 1px;
  font-weight: bold;
  line-height: 10px;
}

.channel-group {
  display: flex;
  justify-content: space-between;
  width: 372px;
  min-height: 78px;
  margin-top: 4px;
}

.channel-side {
  width: 272px;
}

.channels {
  display: flex;
  gap: 1px;
  width: 268px;
  margin: -5px 0 0 5px;
  background: #ece9d8;
}

.channel {
  width: 33px;
  height: 22px;
  border: 1px solid #204868;
  background: linear-gradient(#d0d0d0, #b4b4b4);
  color: #808080;
  font-size: 12px;
  line-height: 20px;
}

.ch-1 {
  width: 56px;
  background: linear-gradient(#30f030, #00dc00);
  color: #000;
  font-weight: bold;
}

.ch-4 {
  background: linear-gradient(#5080ff, #1848ff);
  color: #000;
}

.name-row {
  display: flex;
  align-items: center;
  gap: 3px;
  padding: 3px 0 0 7px;
}

.name-box {
  display: flex;
  width: 242px;
  height: 24px;
  padding: 1px;
  border: 1px solid #38d038;
  background: #fff;
}

.name-box input {
  flex: 1;
  min-width: 0;
  padding-left: 1px;
  font: 14px/20px "Liberation Sans", Arial, sans-serif;
}

.name-box button {
  display: flex;
  align-items: center;
  justify-content: center;
  width: 17px;
  border: 1px solid;
  border-color: #fff #8c8878 #8c8878 #fff;
  background: #ece9d8;
}

.toggles {
  display: flex;
  gap: 1px;
  padding: 1px 0 0 8px;
}

.toggle {
  width: 29px;
  height: 28px;
}

.toggle svg {
  width: 27px;
  height: 26px;
}

.fx {
  font: bold 19px/24px "Liberation Serif", serif;
}

.fx sub {
  font: italic bold 13px/13px "Liberation Serif", serif;
}

.dial {
  font-family: "Liberation Sans", Arial, sans-serif;
  font-size: 9px;
}

.channel-group .dial {
  margin-top: 7px;
}

.dial-value {
  font-size: 14px;
  text-anchor: middle;
}

.rate-group {
  width: 105px;
}

.rate-group legend {
  color: #000070;
}

.rate-group .dial {
  margin: 2px 0 0 3px;
}

.sync-group {
  width: 136px;
}

.sync-group legend {
  color: #aca899;
}

.sync-row {
  display: flex;
  align-items: center;
  gap: 4px;
  padding: 6px 0 0 9px;
}

.sync-tool {
  width: 26px;
  height: 26px;
}

.sync-tool svg {
  width: 24px;
  height: 24px;
}

.sync-drop {
  width: 47px;
  height: 21px;
  border: 1px solid #aca899;
  background: none;
}

.sync-drop select {
  opacity: 1;
  color: #303030;
  font-size: 12px;
}

.sync-tool.wide {
  margin-left: 6px;
}

.run-group {
  width: 134px;
}

.run-group legend {
  color: #1050c8;
}

.run-grid {
  display: grid;
  grid-template-columns: 40px 40px 40px;
  gap: 1px 3px;
  padding: 5px 0 0 3px;
}

.run-button {
  display: flex;
  align-items: center;
  justify-content: center;
  height: 32px;
  border: 1px solid #103858;
  border-radius: 2px;
  background: linear-gradient(#fff, #ece9dc 80%, #d8d4c4);
}

.run-button.idle {
  border-color: #c8c4b4;
  background: #ece9d8;
}

.run-button.alert {
  border-color: #c01818;
  background: #f4f2f4;
}

.run-button.start {
  grid-column: span 2;
  justify-content: flex-start;
  padding-left: 9px;
  font-size: 12px;
  font-weight: bold;
}

.start span {
  margin-left: 18px;
}

.load {
  align-self: end;
  margin: 0 0 2px 6px;
  font-weight: bold;
  color: #108010;
}

.status {
  display: flex;
  gap: 3px;
  padding: 2px 0 0;
}

.cell {
  height: 17px;
  padding: 0 3px;
  border: 1px solid;
  border-color: #aca899 #fff #fff #aca899;
  line-height: 15px;
}

.first { width: 190px; white-space: nowrap; }
.grow { flex: 1; }
.version { width: 47px; }

.taskbar {
  height: 4px;
  background: linear-gradient(#3070e0, #4890f8);
}

.start-edge {
  display: block;
  width: 93px;
  height: 4px;
  border-radius: 0 4px 0 0;
  background: linear-gradient(#2c7830, #60b060);
}
</style>
